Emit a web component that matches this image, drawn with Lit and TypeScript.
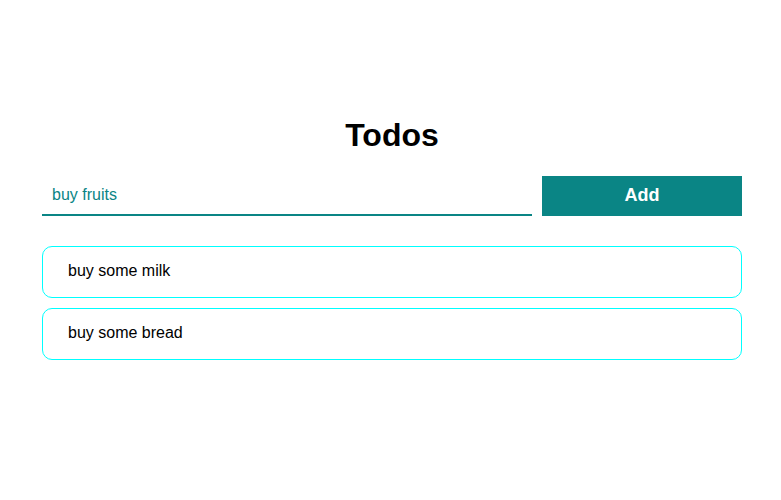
import { LitElement, html, css } from "lit";
import { customElement, state } from "lit/decorators.js";

@customElement("app-root")
export class AppRoot extends LitElement {
  @state() private draft = "buy fruits";
  @state() private todos = ["buy some milk", "buy some bread"];

  static styles = css`
    :host {
      display: block;
      box-sizing: border-box;
      min-height: 100vh;
      padding: 116px 39px 0 42px;
      background: #fff;
      color: #000;
      font-family: "Liberation Sans", Arial, sans-serif;
      font-size: 16px;
    }
    .title {
      margin: 0 0 22px;
      font-size: 32px;
      line-height: 38px;
      font-weight: 700;
      text-align: center;
    }
    .form {
      display: flex;
      gap: 10px;
      height: 40px;
      margin: 0 0 30px;
    }
    .field {
      flex: 1;
      min-width: 0;
      box-sizing: border-box;
      padding: 0 10px;
      border: 0;
      border-bottom: 2px solid #0a8585;
      border-radius: 0;
      outline: 0;
      background: transparent;
      color: #0a8585;
      font: inherit;
    }
    .add {
      width: 200px;
      padding: 0 0 2px;
      border: 0;
      background: #0a8585;
      color: #fff;
      font: 700 18px "Liberation Sans", Arial, sans-serif;
    }
    .list {
      display: flex;
      flex-direction: column;
      gap: 10px;
      margin: 0;
      padding: 0;
      list-style: none;
    }
    .item {
      box-sizing: border-box;
      height: 52px;
      padding: 15px 25px;
      border: 1px solid aqua;
      border-radius: 10px;
      line-height: 18px;
    }
  `;

  private add(e: Event) {
    e.preventDefault();
    const text = this.draft.trim();
    if (!text) return;
    this.todos = [...this.todos, text];
    this.draft = "";
  }

  render() {
    return html`
      <h1 class="title">Todos</h1>
      <form class="form" @submit=${this.add}>
        <input
          class="field"
          .value=${this.draft}
          @input=${(e: Event) => (this.draft = (e.target as HTMLInputElement).value)}
        />
        <button class="add" type="submit">Add</button>
      </form>
      <ul class="list">
        ${this.todos.map((todo) => html`<li class="item">${todo}</li>`)}
      </ul>
    `;
  }
}
